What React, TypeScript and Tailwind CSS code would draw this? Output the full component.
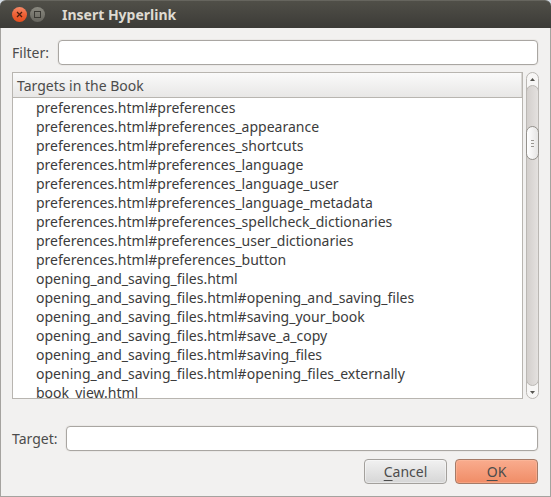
import { useState } from "react";

const targets = [
  "preferences.html#preferences",
  "preferences.html#preferences_appearance",
  "preferences.html#preferences_shortcuts",
  "preferences.html#preferences_language",
  "preferences.html#preferences_language_user",
  "preferences.html#preferences_language_metadata",
  "preferences.html#preferences_spellcheck_dictionaries",
  "preferences.html#preferences_user_dictionaries",
  "preferences.html#preferences_button",
  "opening_and_saving_files.html",
  "opening_and_saving_files.html#opening_and_saving_files",
  "opening_and_saving_files.html#saving_your_book",
  "opening_and_saving_files.html#save_a_copy",
  "opening_and_saving_files.html#saving_files",
  "opening_and_saving_files.html#opening_files_externally",
  "book_view.html",
];

function TitleBar() {
  return (
    <header className="flex h-7 shrink-0 items-center gap-[3px] rounded-t-md border-t border-[#66655e] bg-linear-to-b from-[#504f48] to-[#3c3b37] pl-3">
      <button type="button" aria-label="Close" className="size-[15px] rounded-full">
        <svg viewBox="0 0 15 15" className="size-[15px]" fill="none">
          <defs>
            <linearGradient id="closeFill" x1="0" y1="0" x2="0" y2="1">
              <stop offset="0" stopColor="#f68a68" />
              <stop offset="0.5" stopColor="#ee6136" />
              <stop offset="1" stopColor="#e54e1e" />
            </linearGradient>
          </defs>
          <circle cx="7.5" cy="7.5" r="7.5" fill="url(#closeFill)" />
          <path d="M5 5l5 5M10 5l-5 5" stroke="#4b1e0e" strokeWidth="1.3" />
        </svg>
      </button>
      <button type="button" aria-label="Maximize" className="size-[15px] rounded-full">
        <svg viewBox="0 0 15 15" className="size-[15px]" fill="none">
          <defs>
            <linearGradient id="maxFill" x1="0" y1="0" x2="0" y2="1">
              <stop offset="0" stopColor="#8a8980" />
              <stop offset="1" stopColor="#66655e" />
            </linearGradient>
          </defs>
          <circle cx="7.5" cy="7.5" r="7.5" fill="url(#maxFill)" />
          <rect x="4.5" y="4.5" width="6" height="6" stroke="#3a3934" />
        </svg>
      </button>
      <h1 className="pl-3.5 text-sm font-bold text-[#dfdbd2]">Insert Hyperlink</h1>
    </header>
  );
}

function Field({ id, label }: { id: string; label: string }) {
  const [value, setValue] = useState("");
  return (
    <div className="flex shrink-0 items-center gap-[9px] pr-px">
      <label htmlFor={id} className="text-sm">
        {label}
      </label>
      <input
        id={id}
        type="text"
        value={value}
        onChange={(e) => setValue(e.target.value)}
        className="h-[25px] min-w-0 flex-1 rounded-sm border border-[#a9a6a2] bg-white px-1.5 text-sm shadow-[0_0_0_1px_#ebe9e7] outline-none"
      />
    </div>
  );
}

function ScrollBar() {
  return (
    <div className="flex w-[13px] shrink-0 flex-col rounded-full border border-[#bab7b3] bg-[#f7f6f5]">
      <button type="button" aria-label="Scroll up" className="flex h-3 shrink-0 items-center justify-center">
        <svg viewBox="0 0 5 3" className="h-[3px] w-[5px]">
          <path d="M2.5 0L5 3H0z" fill="#55544f" />
        </svg>
      </button>
      <div className="-mx-px flex-1 rounded-full border border-[#bab7b3] bg-linear-to-r from-[#d3cfcc] to-[#e4e1df] pt-10">
        <div className="-mx-px flex h-[34px] flex-col items-center justify-center gap-0.5 rounded-full border border-[#94918c] bg-linear-to-r from-white to-[#e6e5e4]">
          <span className="h-px w-[3px] bg-[#999691]" />
          <span className="h-px w-[3px] bg-[#999691]" />
          <span className="h-px w-[3px] bg-[#999691]" />
        </div>
      </div>
      <button type="button" aria-label="Scroll down" className="flex h-3 shrink-0 items-center justify-center">
        <svg viewBox="0 0 5 3" className="h-[3px] w-[5px]">
          <path d="M0 0h5L2.5 3z" fill="#55544f" />
        </svg>
      </button>
    </div>
  );
}

export default function App() {
  return (
    <div className="h-screen bg-[#d3dbe3] font-['Noto_Sans',sans-serif] text-[#4c4c4c]">
      <div className="flex h-full flex-col">
        <TitleBar />
        <main className="flex min-h-0 flex-1 flex-col border border-t-0 border-[#a5a39f] bg-[#f2f1f0] px-[11px] pt-3 pb-3">
          <Field id="filter" label="Filter:" />
          <div className="mt-[7px] mb-[27px] flex min-h-0 flex-1 gap-[3px]">
            <div className="min-w-0 flex-1 overflow-hidden border border-[#b8b5b0] bg-white">
              <div className="flex h-[25px] items-center border-b border-[#b8b5b0] bg-linear-to-b from-[#fafafa] to-[#e8e7e6] pt-0.5 pl-1 text-sm shadow-[inset_-1px_0_0_#d8d6d3]">
                Targets in the Book
              </div>
              <ul className="text-sm text-[#3c3c3c]">
                {targets.map((target) => (
                  <li key={target} className="h-[19px] pl-[23px] leading-[19px] whitespace-nowrap">
                    {target}
                  </li>
                ))}
              </ul>
            </div>
            <ScrollBar />
          </div>
          <Field id="target" label="Target:" />
          <div className="mt-2 flex shrink-0 justify-end gap-2 pr-px">
            <button
              type="button"
              className="h-[25px] w-[83px] rounded-sm border border-[#a3a09c] bg-linear-to-b from-[#f1f1f1] to-[#d6d6d6] text-sm leading-5 shadow-[inset_0_0_0_1px_#ffffff66]"
            >
              <span className="underline underline-offset-3">C</span>ancel
            </button>
            <button
              type="button"
              className="h-[25px] w-[83px] rounded-sm border border-[#a57b68] bg-linear-to-b from-[#f9ac8e] to-[#f08c66] text-sm leading-5 shadow-[inset_0_0_0_1px_#ffc3a866]"
            >
              <span className="underline underline-offset-3">O</span>K
            </button>
          </div>
        </main>
      </div>
    </div>
  );
}
